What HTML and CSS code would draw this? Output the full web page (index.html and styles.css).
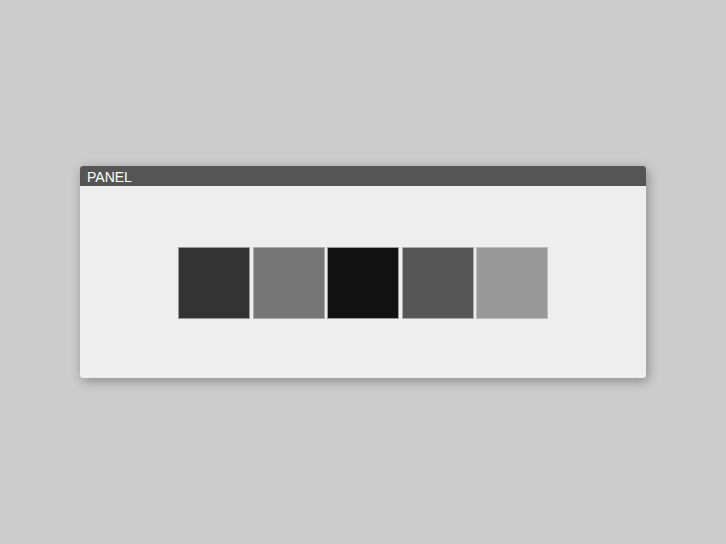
FILE: index.html
```html
<!DOCTYPE html>
<html>
<head>
<meta charset="utf-8">
<link rel="stylesheet" href="styles.css">
</head>
<body>
<div class="stage">
  <div class="panel">
    <div class="panel-header">PANEL</div>
    <div class="panel-body">
      <div class="swatch s1"></div>
      <div class="swatch s2"></div>
      <div class="swatch s3"></div>
      <div class="swatch s4"></div>
      <div class="swatch s5"></div>
    </div>
  </div>
</div>
</body>
</html>
```
FILE: styles.css
```css
html, body {
  margin: 0;
  padding: 0;
  background: #cccccc;
  font-family: "Liberation Sans", Arial, sans-serif;
}
.stage {
  width: 726px;
  height: 544px;
  display: flex;
  flex-direction: column;
  align-items: center;
  padding-top: 166px;
  box-sizing: border-box;
}
.panel {
  width: 566px;
  height: 212px;
  background: #eeeeee;
  border-radius: 3px;
  overflow: hidden;
  box-shadow: 2px 3px 12px rgba(0, 0, 0, 0.32);
  display: flex;
  flex-direction: column;
}
.panel-header {
  height: 20px;
  background: #555555;
  color: #ffffff;
  font-size: 14px;
  line-height: 22px;
  padding-left: 7px;
}
.panel-body {
  flex: 1;
  display: flex;
  justify-content: center;
  align-items: center;
  gap: 2.5px;
  padding-top: 2px;
}
.swatch {
  width: 70px;
  height: 70px;
  border: 1px solid #b5b5b5;
}
.s1 { background: #333333; border-color: #999999; }
.s2 { background: #777777; border-color: #aaaaaa; }
.s3 { background: #111111; border-color: #999999; }
.s4 { background: #555555; border-color: #aaaaaa; }
.s5 { background: #999999; border-color: #bbbbbb; }
```
